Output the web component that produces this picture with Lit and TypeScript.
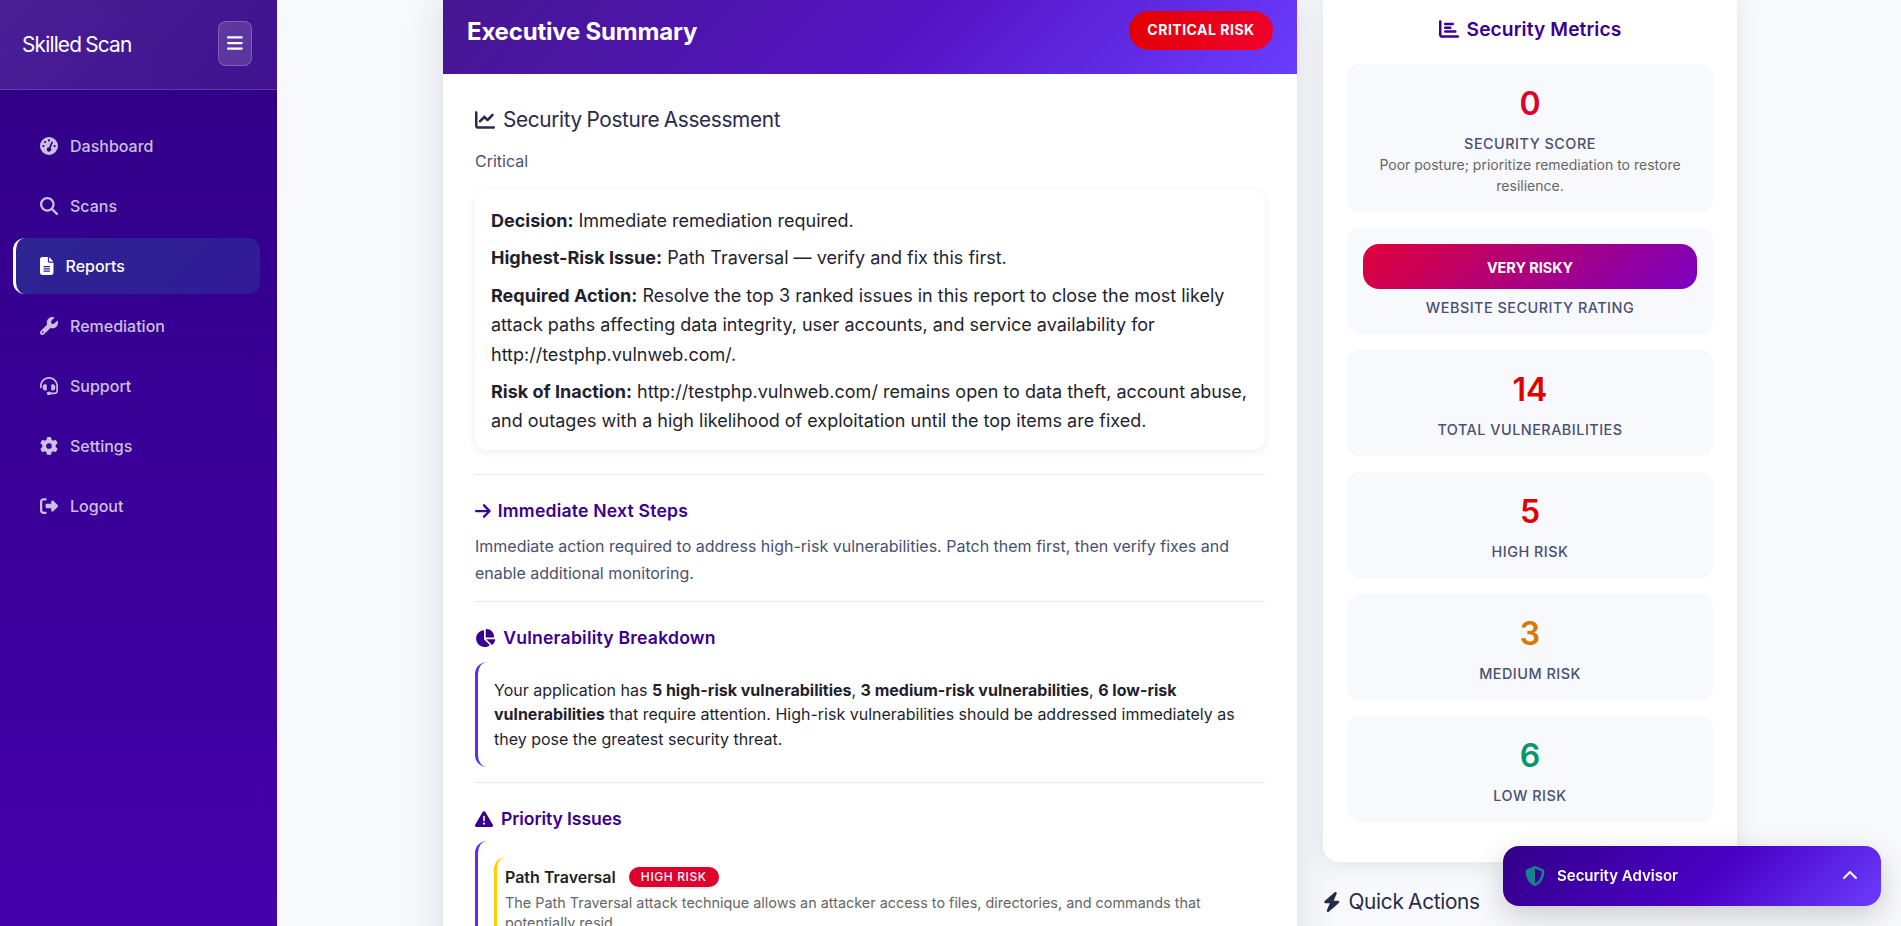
import { LitElement, html, css, svg } from "lit";
import { customElement } from "lit/decorators.js";

const P: Record<string, [number, string]> = {
  gauge: [512, "M0 256a256 256 0 1 1 512 0A256 256 0 1 1 0 256zM288 96a32 32 0 1 0 -64 0 32 32 0 1 0 64 0zM256 416c35.3 0 64-28.7 64-64c0-17.4-6.9-33.1-18.1-44.6L366 161.7c5.3-12.1-.2-26.3-12.3-31.6s-26.3 .2-31.6 12.3L257.9 288c-.6 0-1.3 0-1.9 0c-35.3 0-64 28.7-64 64s28.7 64 64 64zM176 144a32 32 0 1 0 -64 0 32 32 0 1 0 64 0zM96 288a32 32 0 1 0 0-64 32 32 0 1 0 0 64zm352-32a32 32 0 1 0 -64 0 32 32 0 1 0 64 0z"],
  search: [512, "M416 208c0 45.9-14.9 88.3-40 122.7L502.6 457.4c12.5 12.5 12.5 32.8 0 45.3s-32.8 12.5-45.3 0L330.7 376c-34.4 25.2-76.8 40-122.7 40C93.1 416 0 322.9 0 208S93.1 0 208 0S416 93.1 416 208zM208 352a144 144 0 1 0 0-288 144 144 0 1 0 0 288z"],
  file: [384, "M64 0C28.7 0 0 28.7 0 64V448c0 35.3 28.7 64 64 64H320c35.3 0 64-28.7 64-64V160H256c-17.7 0-32-14.3-32-32V0H64zM256 0V128H384L256 0zM112 256H272c8.8 0 16 7.2 16 16s-7.2 16-16 16H112c-8.8 0-16-7.2-16-16s7.2-16 16-16zm0 64H272c8.8 0 16 7.2 16 16s-7.2 16-16 16H112c-8.8 0-16-7.2-16-16s7.2-16 16-16zm0 64H272c8.8 0 16 7.2 16 16s-7.2 16-16 16H112c-8.8 0-16-7.2-16-16s7.2-16 16-16z"],
  wrench: [512, "M352 320c88.4 0 160-71.6 160-160c0-15.3-2.2-30.1-6.2-44.2c-3.1-10.8-16.4-13.2-24.3-5.3l-76.8 76.8c-3 3-7.1 4.7-11.3 4.7H336c-8.8 0-16-7.2-16-16V118.6c0-4.2 1.7-8.3 4.7-11.3l76.8-76.8c7.9-7.9 5.4-21.2-5.3-24.3C382.1 2.2 367.3 0 352 0C263.6 0 192 71.6 192 160c0 19.1 3.4 37.5 9.5 54.5L19.9 396.1C7.2 408.8 0 426.1 0 444.1C0 481.6 30.4 512 67.9 512c18 0 35.3-7.2 48-19.9L297.5 310.5c17 6.2 35.4 9.5 54.5 9.5zM80 408a24 24 0 1 1 0 48 24 24 0 1 1 0-48z"],
  headset: [512, "M256 48C141.1 48 48 141.1 48 256v40c0 13.3-10.7 24-24 24s-24-10.7-24-24V256C0 114.6 114.6 0 256 0S512 114.6 512 256V400.1c0 48.6-39.4 88-88.1 88L313.6 488c-8.3 14.3-23.8 24-41.6 24H240c-26.5 0-48-21.5-48-48s21.5-48 48-48h32c17.8 0 33.3 9.7 41.6 24l110.4 .1c22.1 0 40-17.9 40-40V256c0-114.9-93.1-208-208-208zM144 208h16c17.7 0 32 14.3 32 32V352c0 17.7-14.3 32-32 32H144c-35.3 0-64-28.7-64-64V272c0-35.3 28.7-64 64-64zm224 0c35.3 0 64 28.7 64 64v48c0 35.3-28.7 64-64 64H352c-17.7 0-32-14.3-32-32V240c0-17.7 14.3-32 32-32h16z"],
  gear: [512, "M495.9 166.6c3.2 8.7 .5 18.4-6.4 24.6l-43.3 39.4c1.1 8.3 1.7 16.8 1.7 25.4s-.6 17.1-1.7 25.4l43.3 39.4c6.9 6.2 9.6 15.9 6.4 24.6c-4.4 11.9-9.7 23.3-15.8 34.3l-4.7 8.1c-6.6 11-14 21.4-22.1 31.2c-5.9 7.2-15.7 9.6-24.5 6.8l-55.7-17.7c-13.4 10.3-28.2 18.9-44 25.4l-12.5 57.1c-2 9.1-9 16.3-18.2 17.8c-13.8 2.3-28 3.5-42.5 3.5s-28.7-1.2-42.5-3.5c-9.2-1.5-16.2-8.7-18.2-17.8l-12.5-57.1c-15.8-6.5-30.6-15.1-44-25.4L83.1 425.9c-8.8 2.8-18.6 .3-24.5-6.8c-8.1-9.8-15.5-20.2-22.1-31.2l-4.7-8.1c-6.1-11-11.4-22.4-15.8-34.3c-3.2-8.7-.5-18.4 6.4-24.6l43.3-39.4C64.6 273.1 64 264.6 64 256s.6-17.1 1.7-25.4L22.4 191.2c-6.9-6.2-9.6-15.9-6.4-24.6c4.4-11.9 9.7-23.3 15.8-34.3l4.7-8.1c6.6-11 14-21.4 22.1-31.2c5.9-7.2 15.7-9.6 24.5-6.8l55.7 17.7c13.4-10.3 28.2-18.9 44-25.4l12.5-57.1c2-9.1 9-16.3 18.2-17.8C227.3 1.2 241.5 0 256 0s28.7 1.2 42.5 3.5c9.2 1.5 16.2 8.7 18.2 17.8l12.5 57.1c15.8 6.5 30.6 15.1 44 25.4l55.7-17.7c8.8-2.8 18.6-.3 24.5 6.8c8.1 9.8 15.5 20.2 22.1 31.2l4.7 8.1c6.1 11 11.4 22.4 15.8 34.3zM256 336a80 80 0 1 0 0-160 80 80 0 1 0 0 160z"],
  logout: [512, "M377.9 105.9L500.7 228.7c7.2 7.2 11.3 17.1 11.3 27.3s-4.1 20.1-11.3 27.3L377.9 406.1c-6.4 6.4-15 9.9-24 9.9c-18.7 0-33.9-15.2-33.9-33.9l0-62.1-128 0c-17.7 0-32-14.3-32-32l0-64c0-17.7 14.3-32 32-32l128 0 0-62.1c0-18.7 15.2-33.9 33.9-33.9c9 0 17.6 3.6 24 9.9zM160 96L96 96c-17.7 0-32 14.3-32 32l0 256c0 17.7 14.3 32 32 32l64 0c17.7 0 32 14.3 32 32s-14.3 32-32 32l-64 0c-53 0-96-43-96-96L0 128C0 75 43 32 96 32l64 0c17.7 0 32 14.3 32 32s-14.3 32-32 32z"],
  line: [512, "M64 64c0-17.7-14.3-32-32-32S0 46.3 0 64V400c0 44.2 35.8 80 80 80H480c17.7 0 32-14.3 32-32s-14.3-32-32-32H80c-8.8 0-16-7.2-16-16V64zm406.6 86.6c12.5-12.5 12.5-32.8 0-45.3s-32.8-12.5-45.3 0L320 210.7l-57.4-57.4c-12.5-12.5-32.8-12.5-45.3 0l-112 112c-12.5 12.5-12.5 32.8 0 45.3s32.8 12.5 45.3 0L240 221.3l57.4 57.4c12.5 12.5 32.8 12.5 45.3 0l128-128z"],
  arrow: [448, "M438.6 278.6c12.5-12.5 12.5-32.8 0-45.3l-160-160c-12.5-12.5-32.8-12.5-45.3 0s-12.5 32.8 0 45.3L338.8 224 32 224c-17.7 0-32 14.3-32 32s14.3 32 32 32l306.7 0L233.4 393.4c-12.5 12.5-12.5 32.8 0 45.3s32.8 12.5 45.3 0l160-160z"],
  pie: [576, "M304 240V16.6c0-9 7-16.6 16-16.6C443.7 0 544 100.3 544 224c0 9-7.6 16-16.6 16H304zM32 272C32 150.7 122.1 50.3 239 34.3c9.2-1.3 17 6.1 17 15.4V288L412.5 444.5c6.7 6.7 6.2 17.7-1.5 23.1C371.8 495.6 323.8 512 272 512C139.5 512 32 404.6 32 272zm526.4 16c9.3 0 16.6 7.8 15.4 17c-7.7 55.9-34.6 105.6-73.9 142.3c-6 5.6-15.4 5.2-21.2-.7L320 288H558.4z"],
  warn: [512, "M256 32c14.2 0 27.3 7.5 34.5 19.8l216 368c7.3 12.4 7.3 27.7 .2 40.1S486.3 480 472 480H40c-14.3 0-27.6-7.7-34.7-20.1s-7-27.8 .2-40.1l216-368C228.7 39.5 241.8 32 256 32zm0 128c-13.3 0-24 10.7-24 24V296c0 13.3 10.7 24 24 24s24-10.7 24-24V184c0-13.3-10.7-24-24-24zm32 224a32 32 0 1 0 -64 0 32 32 0 1 0 64 0z"],
  bar: [512, "M32 32c17.7 0 32 14.3 32 32V400c0 8.8 7.2 16 16 16H480c17.7 0 32 14.3 32 32s-14.3 32-32 32H80c-44.2 0-80-35.8-80-80V64C0 46.3 14.3 32 32 32zm96 96c0-17.7 14.3-32 32-32l192 0c17.7 0 32 14.3 32 32s-14.3 32-32 32l-192 0c-17.7 0-32-14.3-32-32zm32 64H288c17.7 0 32 14.3 32 32s-14.3 32-32 32H160c-17.7 0-32-14.3-32-32s14.3-32 32-32zm0 96H416c17.7 0 32 14.3 32 32s-14.3 32-32 32H160c-17.7 0-32-14.3-32-32s14.3-32 32-32z"],
  bolt: [448, "M349.4 44.6c5.9-13.7 1.5-29.7-10.6-38.5s-28.6-8-39.9 1.8l-256 224c-10 8.8-13.6 22.9-8.9 35.3S50.7 288 64 288H175.5L98.6 467.4c-5.9 13.7-1.5 29.7 10.6 38.5s28.6 8 39.9-1.8l256-224c10-8.8 13.6-22.9 8.9-35.3s-16.6-20.7-30-20.7H272.5L349.4 44.6z"],
  bars: [448, "M0 96C0 78.3 14.3 64 32 64H416c17.7 0 32 14.3 32 32s-14.3 32-32 32H32C14.3 128 0 113.7 0 96zM0 256c0-17.7 14.3-32 32-32H416c17.7 0 32 14.3 32 32s-14.3 32-32 32H32c-17.7 0-32-14.3-32-32zM448 416c0 17.7-14.3 32-32 32H32c-17.7 0-32-14.3-32-32s14.3-32 32-32H416c17.7 0 32 14.3 32 32z"],
  shield: [512, "M256 0c4.6 0 9.2 1 13.4 2.9L457.7 82.8c22 9.3 38.4 31 38.3 57.2c-.5 99.2-41.3 280.7-213.6 363.2c-16.7 8-36.1 8-52.8 0C57.3 420.7 16.5 239.2 16 140c-.1-26.2 16.3-48 38.3-57.2L242.7 2.9C246.8 1 251.4 0 256 0zm0 66.8V444.8C394 378 431.1 230.1 432 141.4L256 66.8l0 0z"],
  chevron: [512, "M233.4 105.4c12.5-12.5 32.8-12.5 45.3 0l192 192c12.5 12.5 12.5 32.8 0 45.3s-32.8 12.5-45.3 0L256 173.3 86.6 342.6c-12.5 12.5-32.8 12.5-45.3 0s-12.5-32.8 0-45.3l192-192z"],
};

function icon(name: string, size: number) {
  const [w, d] = P[name];
  return html`<svg class="ico" width=${(size * w) / 512} height=${size} viewBox="0 0 ${w} 512" fill="currentColor">${svg`<path d=${d}></path>`}</svg>`;
}

const NAV: [string, string][] = [
  ["gauge", "Dashboard"], ["search", "Scans"], ["file", "Reports"], ["wrench", "Remediation"],
  ["headset", "Support"], ["gear", "Settings"], ["logout", "Logout"],
];

@customElement("app-root")
export class AppRoot extends LitElement {
  static styles = css`
    :host { display: flex; height: 100vh; overflow: hidden; background: #f8f9fc; font-family: Inter, "Liberation Sans", sans-serif; color: #1a1a2e; font-size: 16px; line-height: 1.6; }
    .ico { flex: none; display: block; }
    .side { width: 277px; flex: none; height: 926px; background: linear-gradient(180deg, #2f0085 0%, #4400aa 100%); color: #fff; }
    .brand { height: 89px; box-sizing: content-box; border-bottom: 1px solid rgba(255,255,255,.15); background: linear-gradient(135deg, rgba(255,255,255,.12), rgba(255,255,255,.07)); display: flex; align-items: center; justify-content: space-between; padding: 0 25px 0 22px; }
    .logo { font-size: 20.8px; font-weight: 400; letter-spacing: -.8px; word-spacing: -1px; }
    .toggle { width: 34px; height: 45px; box-sizing: border-box; border: 1px solid rgba(255,255,255,.2); border-radius: 8px; background: rgba(255,255,255,.15); display: flex; align-items: center; justify-content: center; margin-top: -3px; }
    nav { display: flex; flex-direction: column; gap: 4px; padding: 28px 17px 0 13px; }
    .item { height: 56px; display: flex; align-items: center; gap: 12px; padding-left: 27px; color: rgba(255,255,255,.75); font-size: 16px; font-weight: 500; border-radius: 12px; }
    .item span { padding-top: 1px; }
    .item.on { color: #fff; padding-left: 24px; border-left: 3px solid #fff; background: linear-gradient(135deg, #2c2590, #321a98); }

    main { flex: 1; display: flex; justify-content: center; min-width: 0; }
    .wrap { width: 1294px; margin-left: 2px; margin-top: -13px; display: flex; gap: 26px; align-items: flex-start; }
    .left { width: 854px; flex: none; background: #fff; box-shadow: 0 10px 40px rgba(0,0,0,.12); }
    .exec { height: 87px; box-sizing: border-box; padding: 0 24px; display: flex; align-items: center; justify-content: space-between; background: linear-gradient(135deg, #44178f 0%, #5514c4 55%, #6a3dff 100%); color: #fff; }
    .exec h2 { margin: 4px 0 0; font-size: 24px; font-weight: 700; letter-spacing: -.2px; }
    .crit { height: 39px; width: 144px; display: flex; align-items: center; justify-content: center; border-radius: 20px; background: linear-gradient(135deg, #e00000, #f20030); font-size: 14px; font-weight: 700; letter-spacing: .5px; }
    .body { padding: 29px 32px 60px; }
    .h { display: flex; align-items: center; margin: 0; font-weight: 600; color: #3a0090; font-size: 17.6px; line-height: 28px; }
    .posture { color: #2a2a4a; font-size: 20.8px; font-weight: 400; gap: 8px; line-height: 34px; letter-spacing: -.35px; word-spacing: -1px; }
    .crt { color: #4a5070; font-size: 16px; line-height: 24px; margin: 12px 0 0; }
    .decision { margin-top: 17px; padding: 16px 16px 14.4px; border-radius: 12px; box-shadow: 0 2px 10px rgba(0,0,0,.07); font-size: 18px; line-height: 29.4px; color: #1f1f2e; }
    .decision p { margin: 0 0 8px; }
    .decision p:last-child { margin: 0; }
    hr { border: 0; height: 1px; background: #e4e6f0; margin: 0; }
    .steps { color: #4a5070; font-size: 16px; line-height: 26.4px; margin: 8px 0 0; }
    .bd { margin-top: 10px; border-left: 3px solid #5a30f0; border-radius: 12px; padding: 16px; font-size: 16px; line-height: 24.3px; color: #1f1f2e; }
    .bd b { font-weight: 700; }
    .pri { margin-top: 8px; border-left: 3px solid #5a30f0; border-radius: 12px; padding: 16px 16px 40px; }
    .issue { border-left: 3px solid #ffd000; border-radius: 12px; padding: 8px 8px 16px; }
    .it { display: flex; align-items: center; gap: 13px; font-size: 16px; font-weight: 600; color: #222; line-height: 24px; }
    .hr { height: 20px; width: 90px; display: flex; align-items: center; justify-content: center; border-radius: 10px; background: #e0002e; color: #fff; font-size: 12px; font-weight: 500; letter-spacing: .6px; box-shadow: 0 1px 3px rgba(0,0,0,.15); }
    .desc { font-size: 14.4px; line-height: 20px; color: #666; margin: 4px 0 0; }

    .right { width: 414px; flex: none; }
    .metrics { background: #fff; border-radius: 16px; box-shadow: 0 4px 24px rgba(0,0,0,.09); padding: 26px 24px 40px; box-sizing: border-box; }
    .mt { display: flex; justify-content: center; align-items: center; gap: 8px; font-size: 19.2px; font-weight: 600; color: #3a0090; line-height: 32px; margin-bottom: 19px; letter-spacing: .1px; }
    .m { background: #f8f9fc; border-radius: 12px; padding: 16px; text-align: center; margin-top: 16px; box-sizing: border-box; }
    .mt + .m { margin-top: 0; }
    .n { font-size: 32px; font-weight: 600; line-height: 48px; margin-bottom: 6px; }
    .l { font-size: 14.4px; font-weight: 500; letter-spacing: .5px; line-height: 20px; color: #4a5070; text-transform: uppercase; }
    .s { font-size: 14px; line-height: 21px; color: #666; }
    .pill { height: 45px; padding-top: 3px; box-sizing: border-box; border-radius: 16px; display: flex; align-items: center; justify-content: center; color: #fff; font-size: 14.4px; font-weight: 700; background: linear-gradient(135deg, #e0003a, #7a00c0); margin-bottom: 9px; }
    .qa { display: flex; align-items: center; gap: 8px; font-size: 20.8px; font-weight: 400; color: #2a2a4a; line-height: 34px; margin-top: 23px; letter-spacing: -.3px; word-spacing: -1px; }

    .adv { position: fixed; right: 20px; bottom: 20px; width: 378px; height: 60px; box-sizing: border-box; padding: 0 23px 0 22px; border-radius: 16px; display: flex; align-items: center; gap: 12px; color: #fff; font-size: 15px; font-weight: 600; background: linear-gradient(135deg, #330089 0%, #4a00c4 55%, #6a3dff 100%); box-shadow: 0 10px 30px rgba(0,0,0,.18); }
    .adv span { flex: 1; }
    .sh { color: #1b7f8c; }
  `;

  render() {
    return html`
      <aside class="side">
        <div class="brand">
          <div class="logo">Skilled Scan</div>
          <div class="toggle">${icon("bars", 18)}</div>
        </div>
        <nav>
          ${NAV.map(([i, t]) => html`<div class="item ${t === "Reports" ? "on" : ""}">${icon(i, 18)}<span>${t}</span></div>`)}
        </nav>
      </aside>
      <main>
        <div class="wrap">
          <section class="left">
            <div class="exec"><h2>Executive Summary</h2><div class="crit">CRITICAL RISK</div></div>
            <div class="body">
              <h3 class="h posture">${icon("line", 20)}Security Posture Assessment</h3>
              <p class="crt">Critical</p>
              <div class="decision">
                <p><b>Decision:</b> Immediate remediation required.</p>
                <p><b>Highest-Risk Issue:</b> Path Traversal — verify and fix this first.</p>
                <p><b>Required Action:</b> Resolve the top 3 ranked issues in this report to close the most likely attack paths affecting data integrity, user accounts, and service availability for http://testphp.vulnweb.com/.</p>
                <p><b>Risk of Inaction:</b> http://testphp.vulnweb.com/ remains open to data theft, account abuse, and outages with a high likelihood of exploitation until the top items are fixed.</p>
              </div>
              <hr style="margin-top:24px" />
              <h3 class="h" style="margin-top:22px;gap:7px;letter-spacing:.2px">${icon("arrow", 18)}Immediate Next Steps</h3>
              <p class="steps">Immediate action required to address high-risk vulnerabilities. Patch them first, then verify fixes and enable additional monitoring.</p>
              <hr style="margin-top:15px" />
              <h3 class="h" style="margin-top:22px;gap:8px;letter-spacing:.2px">${icon("pie", 18)}Vulnerability Breakdown</h3>
              <div class="bd">Your application has <b>5 high-risk vulnerabilities</b>, <b>3 medium-risk vulnerabilities</b>, <b>6 low-risk vulnerabilities</b> that require attention. High-risk vulnerabilities should be addressed immediately as they pose the greatest security threat.</div>
              <hr style="margin-top:15px" />
              <h3 class="h" style="margin-top:22px;gap:8px;letter-spacing:-.1px">${icon("warn", 18)}Priority Issues</h3>
              <div class="pri">
                <div class="issue">
                  <div class="it">Path Traversal <span class="hr">HIGH RISK</span></div>
                  <p class="desc">The Path Traversal attack technique allows an attacker access to files, directories, and commands that potentially resid</p>
                </div>
              </div>
            </div>
          </section>
          <section class="right">
            <div class="metrics">
              <div class="mt">${icon("bar", 20)}Security Metrics</div>
              <div class="m"><div class="n" style="color:#e0002e">0</div><div class="l">Security Score</div><div class="s">Poor posture; prioritize remediation to restore resilience.</div></div>
              <div class="m"><div class="pill">VERY RISKY</div><div class="l">Website Security Rating</div></div>
              <div class="m"><div class="n" style="color:#e00000">14</div><div class="l">Total Vulnerabilities</div></div>
              <div class="m"><div class="n" style="color:#e00000">5</div><div class="l">High Risk</div></div>
              <div class="m"><div class="n" style="color:#d97706">3</div><div class="l">Medium Risk</div></div>
              <div class="m"><div class="n" style="color:#059669">6</div><div class="l">Low Risk</div></div>
            </div>
            <div class="qa">${icon("bolt", 20)}Quick Actions</div>
          </section>
        </div>
      </main>
      <div class="adv"><div class="sh">${icon("shield", 20)}</div><span>Security Advisor</span>${icon("chevron", 16)}</div>
    `;
  }
}
